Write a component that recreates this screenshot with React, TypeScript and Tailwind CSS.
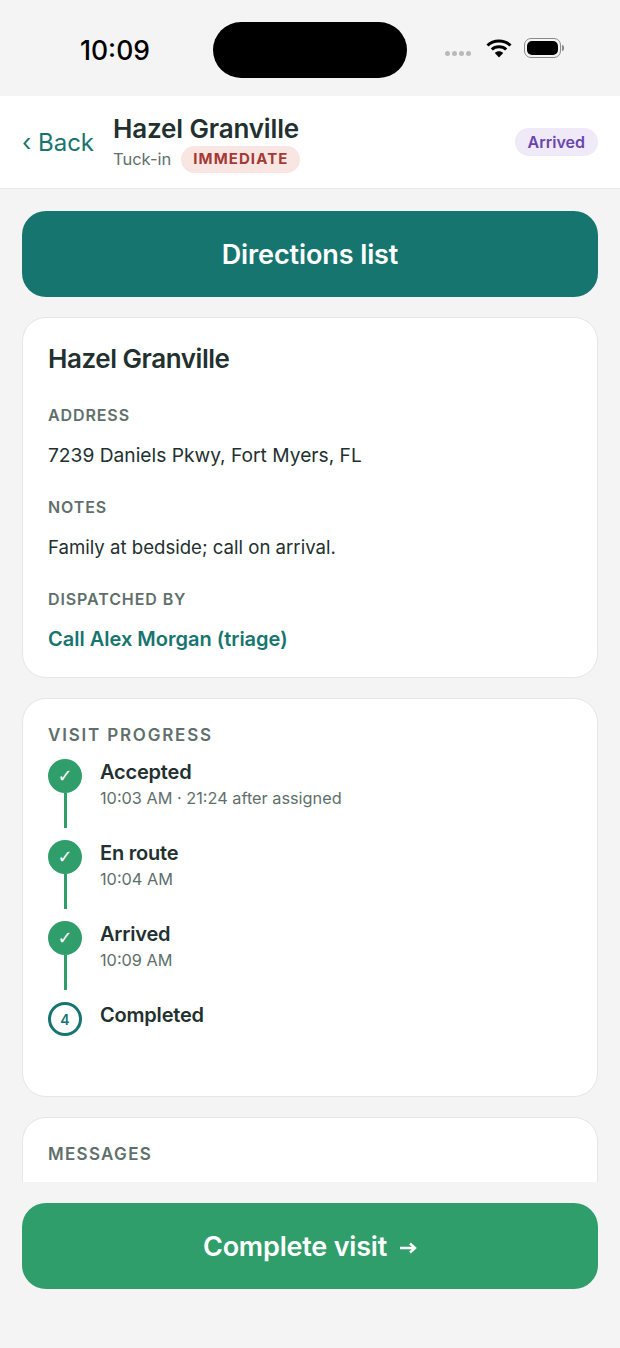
const font = { fontFamily: "Inter, 'Liberation Sans', sans-serif" };

function Label({ children, className = "text-[16px] tracking-[0.9px]" }: { children: string; className?: string }) {
  return <div className={`leading-[20px] font-semibold text-[#5f6f6c] ${className}`}>{children}</div>;
}

function Step({ title, time, last }: { title: string; time?: string; last?: boolean }) {
  return (
    <div className="flex gap-[18px] h-[81px]">
      <div className="flex flex-col items-center w-[34px]">
        {last ? (
          <div className="w-[34px] h-[34px] rounded-full border-[3px] border-[#17756f] flex items-center justify-center text-[14px] font-semibold text-[#17756f]">
            4
          </div>
        ) : (
          <>
            <div className="w-[34px] h-[34px] rounded-full bg-[#2f9e6b] flex items-center justify-center text-white text-[18px] leading-none" style={{ fontFamily: "'DejaVu Sans', sans-serif" }}>
              ✓
            </div>
            <div className="w-[3px] h-[35px] bg-[#2f9e6b]" />
          </>
        )}
      </div>
      <div>
        <div className="text-[20px] leading-[26px] font-semibold text-[#22302f] tracking-[-0.2px]">{title}</div>
        {time && <div className="mt-[1px] text-[16.3px] leading-[24px] text-[#5f6f6c]">{time}</div>}
      </div>
    </div>
  );
}

export default function App() {
  return (
    <div className="w-[620px] h-[1348px] bg-[#f4f4f4] flex flex-col overflow-hidden" style={font}>
      {/* status bar */}
      <div className="h-[96px] flex items-start shrink-0">
        <div className="w-[213px] pt-[34px] pl-[80px] text-[26.5px] leading-[32px] font-medium text-black">10:09</div>
        <div className="mt-[22px] w-[194px] h-[56px] bg-black rounded-[28px]" />
        <div className="flex items-center pt-[40px] pl-[38px]">
          <div className="flex gap-[2px] mt-[8px]">
            <span className="w-[5px] h-[5px] rounded-full bg-[#b9b9b9]" />
            <span className="w-[5px] h-[5px] rounded-full bg-[#b9b9b9]" />
            <span className="w-[5px] h-[5px] rounded-full bg-[#b9b9b9]" />
            <span className="w-[5px] h-[5px] rounded-full bg-[#b9b9b9]" />
          </div>
          <svg width="26" height="20" viewBox="0 0 26 20" className="ml-[15px] -mt-[2px]">
            <path d="M1.5 7.5C7.5 1.5 18.5 1.5 24.5 7.5" fill="none" stroke="#000" strokeWidth="3" />
            <path d="M5.8 11.5C9.5 7.8 16.5 7.8 20.2 11.5" fill="none" stroke="#000" strokeWidth="3" />
            <path d="M13 19.5L8.8 15C11 12.8 15 12.8 17.2 15Z" fill="#000" />
          </svg>
          <div className="ml-[12px] w-[37px] h-[20px] rounded-[7px] border border-[#8a8a8a] p-[2px] -mt-[2px]">
            <div className="w-full h-full rounded-[5px] bg-black" />
          </div>
          <div className="w-[2px] h-[6px] ml-[1px] -mt-[2px] rounded-r-sm bg-[#8a8a8a]" />
        </div>
      </div>

      {/* header */}
      <div className="h-[93px] shrink-0 bg-white border-b border-[#e6e6e6] flex items-center pl-[22px] pr-[22px]">
        <div className="text-[24px] leading-[32px] text-[#17756f] w-[91px] mt-[2px]">‹ Back</div>
        <div className="flex-1 mt-[1px]">
          <div className="text-[26px] leading-[32px] font-semibold text-[#22302f] tracking-[-0.15px]">Hazel Granville</div>
          <div className="flex items-center gap-[10px] mt-[1px]">
            <span className="text-[16.5px] text-[#5f6f6c]">Tuck-in</span>
            <span className="h-[27px] px-[12px] rounded-full bg-[#f9e6e3] text-[#a33a36] text-[15px] font-bold tracking-[1.1px] flex items-center">
              IMMEDIATE
            </span>
          </div>
        </div>
        <div className="h-[28px] px-[13px] rounded-full bg-[#efe9f8] text-[#6a45ad] text-[16px] font-semibold flex items-center">
          Arrived
        </div>
      </div>

      {/* scroll area */}
      <div className="h-[993px] shrink-0 overflow-hidden px-[22px] pt-[22px] flex flex-col gap-[20px]">
        <button className="h-[86px] shrink-0 w-full rounded-[24px] bg-[#17756f] text-white text-[27px] font-semibold tracking-[-0.1px] pt-[2px]">
          Directions list
        </button>

        <div className="shrink-0 h-[361px] rounded-[24px] bg-white border border-[#e6e6e6] pt-[25px] px-[25px]">
          <div className="text-[26px] leading-[32px] font-semibold text-[#22302f] tracking-[-0.45px]">Hazel Granville</div>
          <div className="mt-[30px]"><Label>ADDRESS</Label></div>
          <div className="mt-[17px] text-[19.2px] leading-[26px] text-[#22302f]">7239 Daniels Pkwy, Fort Myers, FL</div>
          <div className="mt-[29px]"><Label>NOTES</Label></div>
          <div className="mt-[17px] text-[18.6px] leading-[26px] text-[#22302f]">Family at bedside; call on arrival.</div>
          <div className="mt-[29px]"><Label>DISPATCHED BY</Label></div>
          <div className="mt-[17px] text-[20px] leading-[26px] font-semibold text-[#17756f]">Call Alex Morgan (triage)</div>
        </div>

        <div className="shrink-0 h-[399px] rounded-[24px] bg-white border border-[#e6e6e6] pt-[26px] px-[25px]">
          <Label className="text-[17px] tracking-[1.8px]">VISIT PROGRESS</Label>
          <div className="mt-[14px]">
            <Step title="Accepted" time="10:03 AM · 21:24 after assigned" />
            <Step title="En route" time="10:04 AM" />
            <Step title="Arrived" time="10:09 AM" />
            <Step title="Completed" last />
          </div>
        </div>

        <div className="shrink-0 h-[200px] rounded-[24px] bg-white border border-[#e6e6e6] pt-[26px] px-[25px]">
          <Label className="text-[17px] tracking-[1.3px]">MESSAGES</Label>
        </div>
      </div>

      {/* footer */}
      <div className="px-[22px] pt-[21px]">
        <button className="h-[86px] w-full rounded-[24px] bg-[#2f9e6b] text-white text-[27px] font-semibold tracking-[-0.2px] pt-[2px] flex items-center justify-center gap-[12px]">
          Complete visit
          <svg width="18" height="14" viewBox="0 0 18 14" className="mt-[2px]">
            <path d="M1 7H16M11 2.5L16 7L11 11.5" fill="none" stroke="#fff" strokeWidth="2.4" />
          </svg>
        </button>
      </div>
    </div>
  );
}
